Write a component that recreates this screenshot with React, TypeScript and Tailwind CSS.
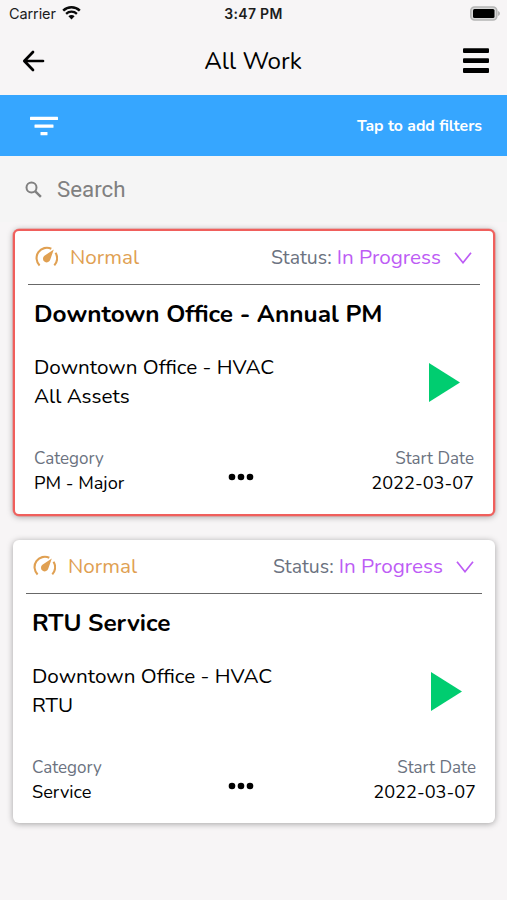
import clsx from "clsx";

type WorkItem = {
  title: string;
  location: string;
  asset: string;
  category: string;
  startDate: string;
  priority: string;
  status: string;
  highlighted: boolean;
};

const workItems: WorkItem[] = [
  {
    title: "Downtown Office - Annual PM",
    location: "Downtown Office - HVAC",
    asset: "All Assets",
    category: "PM - Major",
    startDate: "2022-03-07",
    priority: "Normal",
    status: "In Progress",
    highlighted: true,
  },
  {
    title: "RTU Service",
    location: "Downtown Office - HVAC",
    asset: "RTU",
    category: "Service",
    startDate: "2022-03-07",
    priority: "Normal",
    status: "In Progress",
    highlighted: false,
  },
];

/* Speedometer icon used for the priority */
function GaugeIcon() {
  return (
    <svg className="-mt-px" width="24" height="22" viewBox="0 0 24 22" fill="none">
      <path
        d="M5.6 19.4A10.3 10.3 0 0 1 17.300 2.800M21.500 6.800A10.3 10.3 0 0 1 20.300 19.400"
        stroke="#e0a052"
        strokeWidth="2.100"
      />
      <path d="M19.800 3.500 16.300 13.500A3.700 3.700 0 1 1 10.400 9.800Z" fill="#e0a052" />
    </svg>
  );
}

/* iOS status bar */
function StatusBar() {
  return (
    <div className="grid h-7 grid-cols-3 items-center pl-[7px] pr-[7px] font-['Inter','Liberation_Sans',sans-serif] text-[#1c1c1c]">
      <div className="flex items-center gap-[6px] pl-[2px]">
        <span className="text-[14.5px] tracking-[-0.1px]">Carrier</span>
        <svg className="-mt-[2px]" width="19" height="14" viewBox="0 0 19 14" fill="none" stroke="#0a0a0a">
          <path d="M1.2 4.6a12 12 0 0 1 16.6 0" strokeWidth="2.5" />
          <path d="M4.1 7.8a7.8 7.8 0 0 1 10.8 0" strokeWidth="2.3" />
          <path d="M9.5 13.4 6.4 10.3a4.4 4.4 0 0 1 6.2 0Z" fill="#0a0a0a" stroke="none" />
        </svg>
      </div>
      <span className="-mt-px text-center text-[14px] font-semibold tracking-[0.3px]">3:47 PM</span>
      <svg className="-mt-[2px] justify-self-end" width="31" height="15" viewBox="0 0 31 15">
        <rect x="1.800" y="1" width="26" height="13" rx="3.8" fill="#d8d8d8" stroke="#b5b5b5" strokeWidth="1.6" />
        <rect x="4" y="3" width="21.5" height="9" rx="1.500" fill="#000" />
        <path d="M29 5v5c1.200-.4 2-1.400 2-2.500s-.8-2.100-2-2.500Z" fill="#b5b5b5" />
      </svg>
    </div>
  );
}

function Header() {
  return (
    <div className="flex h-[67px] items-center justify-between pb-[2px] pl-[22px] pr-[18px]">
      <svg
        width="23"
        height="22"
        viewBox="0 0 23 22"
        fill="none"
        stroke="#000"
        strokeWidth="2.7"
        strokeLinecap="round"
        strokeLinejoin="round"
      >
        <path d="M21 11H2.500M11 2 2.300 11l8.700 9" />
      </svg>
      <h1 className="pt-[3px] pr-[2px] text-center text-[24.2px] leading-none whitespace-nowrap">All Work</h1>
      <svg width="26" height="26" viewBox="0 0 26 26">
        <rect y="0.300" width="26" height="4.800" rx="1" />
        <rect y="10.200" width="26" height="4.800" rx="1" />
        <rect y="20.100" width="26" height="4.800" rx="1" />
      </svg>
    </div>
  );
}

function FilterBar() {
  return (
    <div className="flex h-[61px] items-center justify-between bg-[#36a6ff] pl-[30px] pr-[25px] text-white">
      <svg width="28" height="20" viewBox="0 0 28 20" fill="currentColor">
        <rect y="0.800" width="28" height="3.300" rx="0.500" />
        <rect x="4.500" y="8.400" width="19" height="3.300" rx="0.500" />
        <rect x="10.500" y="16" width="7" height="3.300" rx="0.500" />
      </svg>
      <span className="pt-[2px] text-[15.8px] font-bold">Tap to add filters</span>
    </div>
  );
}

function SearchBar() {
  return (
    <div className="flex h-[66px] items-center gap-[15px] bg-[#f5f5f5] pl-[25px] text-[#808080]">
      <svg width="17" height="17" viewBox="0 0 17 17" fill="none" stroke="currentColor">
        <circle cx="6.500" cy="6.500" r="5" strokeWidth="2" />
        <path d="m10.300 10.300 5.600 5.600" strokeWidth="2.400" />
      </svg>
      <span className="pt-[2px] font-['Roboto','Liberation_Sans',sans-serif] text-[22.3px]">Search</span>
    </div>
  );
}

function WorkCard({ item }: { item: WorkItem }) {
  return (
    <div
      className={clsx(
        "rounded-[6px] bg-white",
        item.highlighted
          ? "border-2 border-[#f05f5c] shadow-[0_0_0_0.500px_rgba(240,95,92,0.6),0_1px_6px_rgba(0,0,0,0.34)]"
          : "shadow-[0_1px_6px_rgba(0,0,0,0.34)]",
      )}
    >
      <div className="mx-[13px] flex h-[54px] items-center justify-between border-b border-[#686868] pl-[6px] pr-[8px] text-[20.7px]">
        <div className="flex items-center gap-[12px] text-[#e0a052]">
          <GaugeIcon />
          <span className="pt-px">{item.priority}</span>
        </div>
        <div className="flex items-center pt-px text-[#6b7280]">
          <span className="text-[19.5px]">Status:</span>
          <span className="ml-[5px] text-[#bd5cf5]">{item.status}</span>
          <svg className="ml-[13px]" width="18" height="12" viewBox="0 0 18 12" fill="none">
            <path d="M1 0.700 9 10.700 17 0.700" stroke="#bd5cf5" strokeWidth="1.700" />
          </svg>
        </div>
      </div>

      <div className="px-[19px]">
        <h2 className="flex h-[58px] items-center text-[24.4px] font-bold">{item.title}</h2>
        <div className="mt-[10px] flex items-start justify-between pr-[14px]">
          <div className="text-[20.7px] leading-[28.500px]">
            <p>{item.location}</p>
            <p>{item.asset}</p>
          </div>
          <svg className="mt-[10px]" width="31" height="39" viewBox="0 0 31 39">
            <path d="M0 0 31 19.500 0 39Z" fill="#00cd70" />
          </svg>
        </div>
        <div className="mt-[37px] flex h-[67px] justify-between text-[18.200px] leading-[24px]">
          <div className="w-[110px]">
            <p className="text-[17px] leading-[24px] text-[#6b7280]">Category</p>
            <p>{item.category}</p>
          </div>
          <svg className="mt-[26px] mr-[26px]" width="26" height="8" viewBox="0 0 26 8">
            <circle cx="4" cy="4" r="3.300" />
            <circle cx="13" cy="4" r="3.300" />
            <circle cx="22" cy="4" r="3.300" />
          </svg>
          <div className="w-[110px] text-right">
            <p className="text-[17px] leading-[24px] text-[#6b7280]">Start Date</p>
            <p>{item.startDate}</p>
          </div>
        </div>
      </div>
    </div>
  );
}

export default function App() {
  return (
    <div className="h-[900px] w-[507px] overflow-hidden bg-[#f7f5f6] font-['Nunito','Lato',sans-serif] text-black">
      <StatusBar />
      <Header />
      <FilterBar />
      <SearchBar />
      <div className="flex flex-col gap-6 pt-[7px] pr-[12px] pl-[13px]">
        {workItems.map((item) => (
          <WorkCard key={item.title} item={item} />
        ))}
      </div>
    </div>
  );
}
